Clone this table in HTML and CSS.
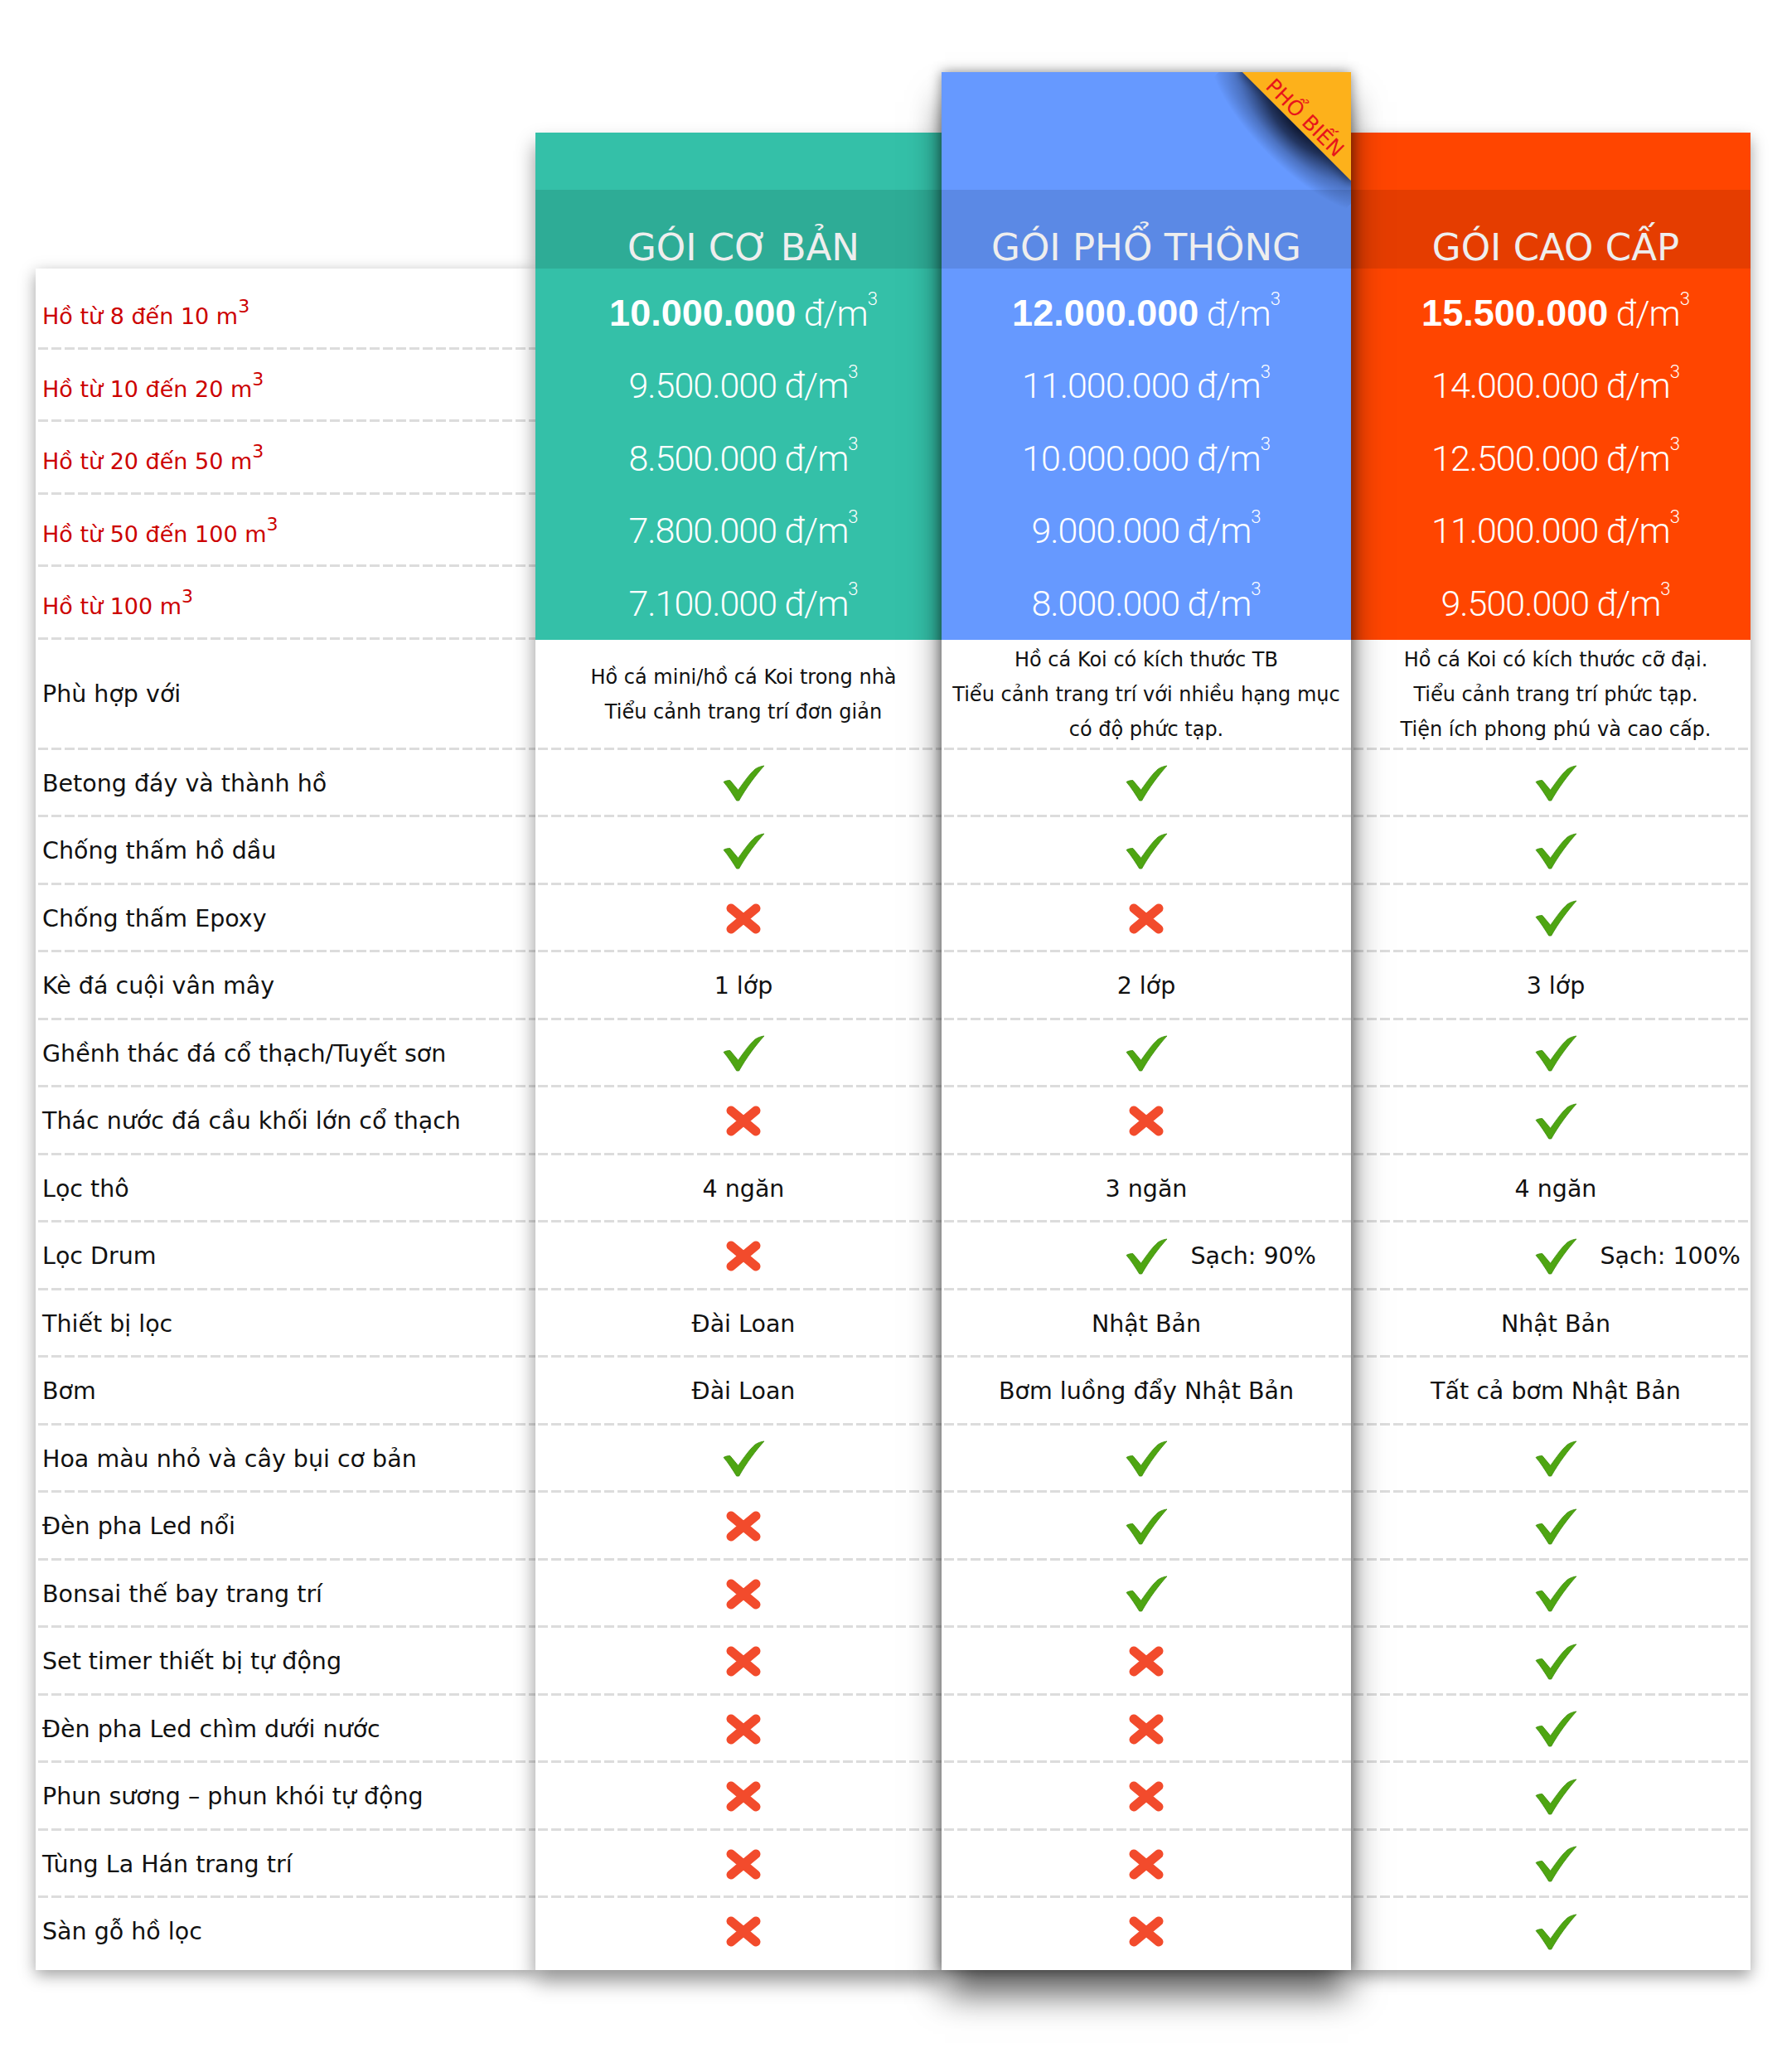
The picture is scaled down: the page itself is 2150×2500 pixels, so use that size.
FILE: index.html
```html
<!DOCTYPE html>
<html lang="vi">
<head>
<meta charset="utf-8">
<title>Bảng giá hồ cá Koi</title>
<link rel="stylesheet" href="styles.css">
</head>
<body>
<svg class="defs" width="0" height="0" aria-hidden="true">
  <defs>
    <symbol id="ok" viewBox="0 0 52 45">
      <path d="M1 21 C3 19.5 6 19 9 19 L19 31 C26 21 33 11 40 5 C43 3 47 1.5 51 1 C41 12 29 28 20 44 L17 44 C12 36 7 28 1 21 Z"/>
    </symbol>
    <symbol id="no" viewBox="0 0 42 37">
      <path d="M6 6 L36 31 M36 6 L6 31"/>
    </symbol>
  </defs>
</svg>

<div class="table">
  <div class="card labels">
    <div class="row lprice">Hồ từ 8 đến 10 m<span class="sup">3</span></div>
    <div class="row lprice">Hồ từ 10 đến 20 m<span class="sup">3</span></div>
    <div class="row lprice">Hồ từ 20 đến 50 m<span class="sup">3</span></div>
    <div class="row lprice">Hồ từ 50 đến 100 m<span class="sup">3</span></div>
    <div class="row lprice">Hồ từ 100 m<span class="sup">3</span></div>
    <div class="row desc">Phù hợp với</div>
    <div class="row feat">Betong đáy và thành hồ</div>
    <div class="row feat">Chống thấm hồ dầu</div>
    <div class="row feat">Chống thấm Epoxy</div>
    <div class="row feat">Kè đá cuội vân mây</div>
    <div class="row feat">Ghềnh thác đá cổ thạch/Tuyết sơn</div>
    <div class="row feat">Thác nước đá cầu khối lớn cổ thạch</div>
    <div class="row feat">Lọc thô</div>
    <div class="row feat">Lọc Drum</div>
    <div class="row feat">Thiết bị lọc</div>
    <div class="row feat">Bơm</div>
    <div class="row feat">Hoa màu nhỏ và cây bụi cơ bản</div>
    <div class="row feat">Đèn pha Led nổi</div>
    <div class="row feat">Bonsai thế bay trang trí</div>
    <div class="row feat">Set timer thiết bị tự động</div>
    <div class="row feat">Đèn pha Led chìm dưới nước</div>
    <div class="row feat">Phun sương – phun khói tự động</div>
    <div class="row feat">Tùng La Hán trang trí</div>
    <div class="row feat">Sàn gỗ hồ lọc</div>
  </div>

  <div class="card plan teal">
    <div class="plan-head">
      <div class="plan-top"></div>
      <div class="plan-title">GÓI CƠ BẢN</div>
    </div>
    <div class="prices">
      <div class="row price"><b>10.000.000</b>&nbsp;đ/m<span class="sup">3</span></div>
      <div class="row price">9.500.000 đ/m<span class="sup">3</span></div>
      <div class="row price">8.500.000 đ/m<span class="sup">3</span></div>
      <div class="row price">7.800.000 đ/m<span class="sup">3</span></div>
      <div class="row price">7.100.000 đ/m<span class="sup">3</span></div>
    </div>
    <div class="row desc">Hồ cá mini/hồ cá Koi trong nhà<br>Tiểu cảnh trang trí đơn giản</div>
    <div class="row feat"><svg class="ok"><use href="#ok"/></svg></div>
    <div class="row feat"><svg class="ok"><use href="#ok"/></svg></div>
    <div class="row feat"><svg class="no"><use href="#no"/></svg></div>
    <div class="row feat">1 lớp</div>
    <div class="row feat"><svg class="ok"><use href="#ok"/></svg></div>
    <div class="row feat"><svg class="no"><use href="#no"/></svg></div>
    <div class="row feat">4 ngăn</div>
    <div class="row feat"><svg class="no"><use href="#no"/></svg></div>
    <div class="row feat">Đài Loan</div>
    <div class="row feat">Đài Loan</div>
    <div class="row feat"><svg class="ok"><use href="#ok"/></svg></div>
    <div class="row feat"><svg class="no"><use href="#no"/></svg></div>
    <div class="row feat"><svg class="no"><use href="#no"/></svg></div>
    <div class="row feat"><svg class="no"><use href="#no"/></svg></div>
    <div class="row feat"><svg class="no"><use href="#no"/></svg></div>
    <div class="row feat"><svg class="no"><use href="#no"/></svg></div>
    <div class="row feat"><svg class="no"><use href="#no"/></svg></div>
    <div class="row feat"><svg class="no"><use href="#no"/></svg></div>
  </div>

  <div class="card plan blue">
    <div class="plan-head">
      <div class="plan-top"></div>
      <div class="plan-title">GÓI PHỔ THÔNG</div>
      <div class="ribbon"><span>PHỔ BIẾN</span></div>
    </div>
    <div class="prices">
      <div class="row price"><b>12.000.000</b>&nbsp;đ/m<span class="sup">3</span></div>
      <div class="row price">11.000.000 đ/m<span class="sup">3</span></div>
      <div class="row price">10.000.000 đ/m<span class="sup">3</span></div>
      <div class="row price">9.000.000 đ/m<span class="sup">3</span></div>
      <div class="row price">8.000.000 đ/m<span class="sup">3</span></div>
    </div>
    <div class="row desc">Hồ cá Koi có kích thước TB<br>Tiểu cảnh trang trí với nhiều hạng mục<br>có độ phức tạp.</div>
    <div class="row feat"><svg class="ok"><use href="#ok"/></svg></div>
    <div class="row feat"><svg class="ok"><use href="#ok"/></svg></div>
    <div class="row feat"><svg class="no"><use href="#no"/></svg></div>
    <div class="row feat">2 lớp</div>
    <div class="row feat"><svg class="ok"><use href="#ok"/></svg></div>
    <div class="row feat"><svg class="no"><use href="#no"/></svg></div>
    <div class="row feat">3 ngăn</div>
    <div class="row feat drum"><span></span><svg class="ok"><use href="#ok"/></svg><span class="drum-text">Sạch: 90%</span></div>
    <div class="row feat">Nhật Bản</div>
    <div class="row feat">Bơm luồng đẩy Nhật Bản</div>
    <div class="row feat"><svg class="ok"><use href="#ok"/></svg></div>
    <div class="row feat"><svg class="ok"><use href="#ok"/></svg></div>
    <div class="row feat"><svg class="ok"><use href="#ok"/></svg></div>
    <div class="row feat"><svg class="no"><use href="#no"/></svg></div>
    <div class="row feat"><svg class="no"><use href="#no"/></svg></div>
    <div class="row feat"><svg class="no"><use href="#no"/></svg></div>
    <div class="row feat"><svg class="no"><use href="#no"/></svg></div>
    <div class="row feat"><svg class="no"><use href="#no"/></svg></div>
  </div>

  <div class="card plan orange">
    <div class="plan-head">
      <div class="plan-top"></div>
      <div class="plan-title">GÓI CAO CẤP</div>
    </div>
    <div class="prices">
      <div class="row price"><b>15.500.000</b>&nbsp;đ/m<span class="sup">3</span></div>
      <div class="row price">14.000.000 đ/m<span class="sup">3</span></div>
      <div class="row price">12.500.000 đ/m<span class="sup">3</span></div>
      <div class="row price">11.000.000 đ/m<span class="sup">3</span></div>
      <div class="row price">9.500.000 đ/m<span class="sup">3</span></div>
    </div>
    <div class="row desc">Hồ cá Koi có kích thước cỡ đại.<br>Tiểu cảnh trang trí phức tạp.<br>Tiện ích phong phú và cao cấp.</div>
    <div class="row feat"><svg class="ok"><use href="#ok"/></svg></div>
    <div class="row feat"><svg class="ok"><use href="#ok"/></svg></div>
    <div class="row feat"><svg class="ok"><use href="#ok"/></svg></div>
    <div class="row feat">3 lớp</div>
    <div class="row feat"><svg class="ok"><use href="#ok"/></svg></div>
    <div class="row feat"><svg class="ok"><use href="#ok"/></svg></div>
    <div class="row feat">4 ngăn</div>
    <div class="row feat drum"><span></span><svg class="ok"><use href="#ok"/></svg><span class="drum-text">Sạch: 100%</span></div>
    <div class="row feat">Nhật Bản</div>
    <div class="row feat">Tất cả bơm Nhật Bản</div>
    <div class="row feat"><svg class="ok"><use href="#ok"/></svg></div>
    <div class="row feat"><svg class="ok"><use href="#ok"/></svg></div>
    <div class="row feat"><svg class="ok"><use href="#ok"/></svg></div>
    <div class="row feat"><svg class="ok"><use href="#ok"/></svg></div>
    <div class="row feat"><svg class="ok"><use href="#ok"/></svg></div>
    <div class="row feat"><svg class="ok"><use href="#ok"/></svg></div>
    <div class="row feat"><svg class="ok"><use href="#ok"/></svg></div>
    <div class="row feat"><svg class="ok"><use href="#ok"/></svg></div>
  </div>
</div>
</body>
</html>
```

FILE: styles.css
```css
html, body {
  margin: 0;
  padding: 0;
  background: #fff;
}

body {
  font-family: "DejaVu Sans", "Noto Sans", sans-serif;
  color: #111;
  width: 2150px;
  min-height: 2500px;
}

.defs {
  position: absolute;
  width: 0;
  height: 0;
  overflow: hidden;
}

.table {
  display: flex;
  align-items: flex-end;
  padding: 87px 0 0 43px;
}

.card {
  background: #fff;
  display: flex;
  flex-direction: column;
  padding-bottom: 5px;
  position: relative;
}

.labels {
  width: 603px;
  padding-top: 10px;
  z-index: 1;
  box-shadow: 0 6px 18px rgba(0, 0, 0, 0.38);
}

.teal { --c: #34c0a8; width: 490px; z-index: 2; box-shadow: 0 14px 22px rgba(0, 0, 0, 0.42); }
.blue { --c: #6699ff; width: 494px; z-index: 3; box-shadow: 0 32px 40px -4px rgba(0, 0, 0, 0.65), 0 0 14px rgba(0, 0, 0, 0.45); }
.orange { --c: #ff4500; width: 482px; z-index: 2; box-shadow: 0 8px 18px rgba(0, 0, 0, 0.38); }

.plan-head {
  position: relative;
  overflow: hidden;
  background: var(--c);
}

.plan-top { height: 69px; }
.blue .plan-top { height: 142px; }

.plan-title {
  height: 95px;
  box-sizing: border-box;
  padding-top: 47px;
  font-size: 45px;
  line-height: 45px;
  color: #eee;
  text-align: center;
  white-space: nowrap;
  background: rgba(0, 0, 0, 0.1);
}

.teal .plan-title, .orange .plan-title,
.teal .row, .orange .row { padding-left: 12px; }

.ribbon {
  position: absolute;
  left: 371px;
  top: -20px;
  width: 185px;
  height: 100px;
  transform: rotate(45deg);
  background: #fdb11b;
  box-shadow: 0 0 12px 3px rgba(10, 18, 40, 0.7);
  display: flex;
  align-items: flex-end;
  justify-content: center;
  color: #e8141b;
  font-size: 25px;
  line-height: 29px;
  white-space: nowrap;
}

.ribbon::before {
  content: "";
  position: absolute;
  left: -20px;
  right: -20px;
  top: 100%;
  height: 48px;
  background: radial-gradient(ellipse 62% 100% at 50% 0, rgba(14, 22, 46, 0.95) 0%, rgba(14, 22, 46, 0.75) 30%, rgba(14, 22, 46, 0.3) 65%, rgba(14, 22, 46, 0) 100%);
}

.prices {
  background: var(--c);
  padding-top: 10px;
  color: #fff;
  font-family: "Roboto", "Liberation Sans", Arial, sans-serif;
  font-weight: 300;
}

.row {
  display: flex;
  align-items: center;
  justify-content: center;
  box-sizing: border-box;
  white-space: nowrap;
  background-image: linear-gradient(90deg, #dcdcdc 12px, transparent 12px);
  background-size: 16px 3px;
  background-repeat: repeat-x;
  background-position: 3px 100%;
}

.labels .row {
  justify-content: flex-start;
  padding-left: 8px;
}

.lprice {
  height: 87.5px;
  padding-top: 8px;
  font-size: 27px;
  color: #cc0000;
}

.price {
  height: 87.5px;
  font-size: 43px;
  letter-spacing: -1px;
  background: none;
}

.price b {
  font-family: "Liberation Sans", Arial, sans-serif;
  font-weight: 700;
  font-size: 45px;
  letter-spacing: 0;
}

.sup {
  font-size: 22px;
  position: relative;
  top: -12px;
  letter-spacing: 0;
}

.price .sup {
  top: -17px;
}

.desc {
  height: 133px;
  font-size: 24px;
  line-height: 42px;
  text-align: center;
}

.labels .desc { font-size: 28.5px; }

.feat {
  height: 81.5px;
  font-size: 28.5px;
}

.feat:last-child { background: none; }

.ok {
  width: 51px;
  height: 44px;
  fill: #4ea512;
  stroke: #3d8c0c;
  stroke-width: 0.8;
}

.no {
  width: 42px;
  height: 37px;
  fill: none;
  stroke: #f24b2c;
  stroke-width: 11;
  stroke-linecap: round;
}

.drum {
  display: grid;
  grid-template-columns: 1fr auto 1fr;
  align-items: center;
}

.drum-text {
  margin-left: 28px;
  justify-self: start;
}
```
